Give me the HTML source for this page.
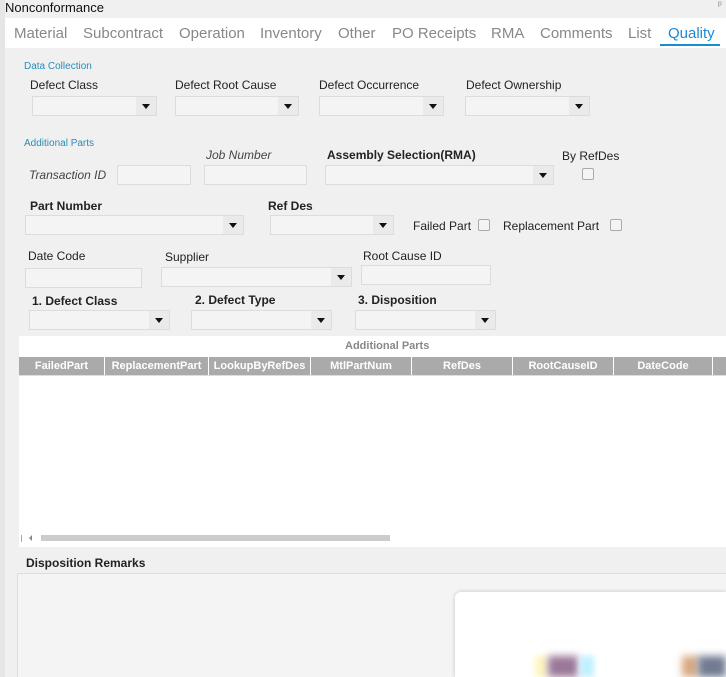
<!DOCTYPE html><html style="overflow:hidden;width:726px;height:677px"><head><style>
body{margin:0;width:726px;height:677px;background:#f0f0f0;font-family:"Liberation Sans",sans-serif;position:relative;overflow:hidden}
div,span{position:absolute;box-sizing:border-box}
.l{font-size:12px;color:#222;white-space:nowrap}
.b{font-weight:bold}.i{font-style:italic;color:#444}
.c{background:#f4f4f4;border:1px solid #dcdcdc}
.c:after{content:"";position:absolute;right:0;top:0;bottom:0;width:20px;background:#eaeaea}
.c:before{content:"";position:absolute;right:6px;top:7px;border-left:4px solid transparent;border-right:4px solid transparent;border-top:5px solid #111;z-index:1}
.in{background:#f4f4f4;border:1px solid #dcdcdc}
.cb{width:12px;height:12px;border:1px solid #aaa;border-radius:2px;background:#f4f4f4}
.t{font-size:15px;color:#888;top:25px}
.h{top:357px;height:18px;background:#aaa;color:#fff;font-size:11px;font-weight:bold;text-align:center;line-height:18px;border-right:1px solid #fff}
.s{font-size:10px;color:#2a8cb8}
</style></head><body>
<div style="left:0;top:0;width:5px;height:677px;background:#e6e6e6"></div>
<div style="left:5px;top:0;font-size:13px;color:#111">Nonconformance</div>
<div style="left:718px;top:0;font-size:10px;color:#888">ᵖ</div>
<div style="left:5px;top:18px;width:721px;height:30px;background:#fff"></div>
<span class="t" style="left:14px">Material</span><span class="t" style="left:83px">Subcontract</span><span class="t" style="left:179px">Operation</span><span class="t" style="left:260px">Inventory</span><span class="t" style="left:338px">Other</span><span class="t" style="left:392px">PO Receipts</span><span class="t" style="left:491px">RMA</span><span class="t" style="left:540px">Comments</span><span class="t" style="left:628px">List</span><span class="t" style="left:668px;color:#1a8ad4">Quality</span>
<div style="left:660px;top:44px;width:60px;height:2px;background:#1a8ad4"></div>
<span class="s" style="left:24px;top:61px">Data Collection</span>
<span class="l" style="left:30px;top:78px">Defect Class</span><span class="l" style="left:175px;top:78px">Defect Root Cause</span><span class="l" style="left:319px;top:78px">Defect Occurrence</span><span class="l" style="left:466px;top:78px">Defect Ownership</span>
<div class="c" style="left:32px;top:96px;width:125px;height:20px"></div><div class="c" style="left:175px;top:96px;width:124px;height:20px"></div><div class="c" style="left:319px;top:96px;width:125px;height:20px"></div><div class="c" style="left:465px;top:96px;width:125px;height:20px"></div>
<span class="s" style="left:24px;top:138px">Additional Parts</span>
<span class="l i" style="left:206px;top:148px">Job Number</span><span class="l i" style="left:29px;top:168px">Transaction ID</span>
<div class="in" style="left:117px;top:165px;width:74px;height:20px"></div><div class="in" style="left:204px;top:165px;width:103px;height:20px"></div>
<span class="l b" style="left:327px;top:148px">Assembly Selection(RMA)</span>
<div class="c" style="left:325px;top:165px;width:229px;height:20px"></div>
<span class="l" style="left:562px;top:149px">By RefDes</span><div class="cb" style="left:582px;top:168px"></div>
<span class="l b" style="left:30px;top:199px">Part Number</span><div class="c" style="left:25px;top:215px;width:219px;height:20px"></div>
<span class="l b" style="left:268px;top:199px">Ref Des</span><div class="c" style="left:270px;top:215px;width:124px;height:20px"></div>
<span class="l" style="left:413px;top:219px">Failed Part</span><div class="cb" style="left:478px;top:219px"></div>
<span class="l" style="left:503px;top:219px">Replacement Part</span><div class="cb" style="left:610px;top:219px"></div>
<span class="l" style="left:28px;top:249px">Date Code</span><div class="in" style="left:25px;top:268px;width:117px;height:20px"></div>
<span class="l" style="left:165px;top:250px">Supplier</span><div class="c" style="left:161px;top:267px;width:191px;height:20px"></div>
<span class="l" style="left:363px;top:249px">Root Cause ID</span><div class="in" style="left:361px;top:265px;width:130px;height:20px"></div>
<span class="l b" style="left:32px;top:294px">1. Defect Class</span><div class="c" style="left:29px;top:310px;width:141px;height:20px"></div>
<span class="l b" style="left:195px;top:293px">2. Defect Type</span><div class="c" style="left:191px;top:310px;width:141px;height:20px"></div>
<span class="l b" style="left:358px;top:293px">3. Disposition</span><div class="c" style="left:355px;top:310px;width:141px;height:20px"></div>
<div style="left:19px;top:336px;width:707px;height:211px;background:#fff"></div>
<span style="left:345px;top:340px;font-size:11px;font-weight:bold;color:#888">Additional Parts</span>
<div class="h" style="left:19px;width:86px">FailedPart</div><div class="h" style="left:105px;width:104px">ReplacementPart</div><div class="h" style="left:209px;width:102px">LookupByRefDes</div><div class="h" style="left:311px;width:101px">MtlPartNum</div><div class="h" style="left:412px;width:101px">RefDes</div><div class="h" style="left:513px;width:101px">RootCauseID</div><div class="h" style="left:614px;width:99px">DateCode</div><div class="h" style="left:713px;width:13px;border:0"></div>
<div style="left:19px;top:375px;width:707px;height:1px;background:#ddd"></div>
<div style="left:21px;top:535px;width:1px;height:7px;background:#aaa"></div>
<div style="left:29px;top:535px;border-top:3px solid transparent;border-bottom:3px solid transparent;border-right:3px solid #888"></div>
<div style="left:41px;top:535px;width:349px;height:6px;background:#ccc"></div>
<span class="l b" style="left:26px;top:556px">Disposition Remarks</span>
<div style="left:17px;top:573px;width:709px;height:104px;background:#f4f4f4;border:1px solid #ddd;border-bottom:0;border-right:0"></div>
<div style="left:455px;top:592px;width:271px;height:85px;background:#fff;border-radius:6px 0 0 0;box-shadow:0 0 4px rgba(0,0,0,.2)"></div>
<div style="left:535px;top:656px;width:12px;height:21px;background:#fff6c0;filter:blur(3px)"></div>
<div style="left:548px;top:656px;width:30px;height:21px;background:#9a7898;filter:blur(4px)"></div>
<div style="left:580px;top:656px;width:14px;height:21px;background:#c0f0ff;filter:blur(3px)"></div>
<div style="left:682px;top:656px;width:16px;height:21px;background:#d8a880;filter:blur(4px)"></div>
<div style="left:698px;top:656px;width:28px;height:21px;background:#707a90;filter:blur(4px)"></div>
</body></html>
